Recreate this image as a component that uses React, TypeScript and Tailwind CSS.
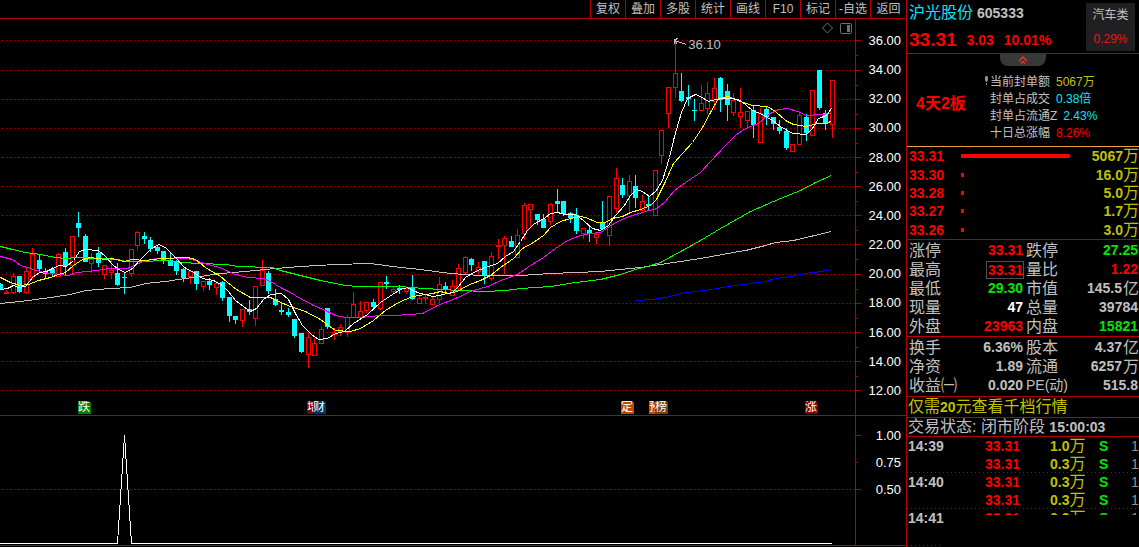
import React, { useState } from 'react';

type Candle = [number, number, number, number, 'u' | 'd'];

// high, body top, body bottom, low, direction
const candles: Candle[] = [
  [283, 284, 288, 289, 'd'], [290, 292, 293, 293, 'u'], [273, 276, 292, 293, 'u'], [276, 276, 291, 292, 'd'],
  [268, 271, 292, 293, 'u'], [248, 254, 276, 278, 'u'], [254, 260, 268, 270, 'd'], [268, 271, 273, 278, 'd'],
  [267, 269, 272, 276, 'd'], [253, 254, 276, 276, 'u'], [248, 252, 265, 275, 'd'], [236, 236, 265, 273, 'u'],
  [212, 223, 227, 236, 'd'], [234, 236, 261, 261, 'd'], [253, 259, 263, 272, 'u'], [247, 253, 262, 266, 'd'],
  [265, 265, 274, 278, 'u'], [257, 270, 272, 278, 'u'], [263, 273, 284, 285, 'd'], [273, 277, 277, 293, 'd'],
  [249, 249, 273, 276, 'u'], [231, 232, 245, 249, 'u'], [232, 236, 238, 243, 'd'], [237, 240, 248, 251, 'd'],
  [246, 247, 250, 253, 'd'], [251, 251, 259, 263, 'd'], [253, 260, 265, 265, 'd'], [260, 261, 270, 274, 'd'],
  [268, 269, 277, 281, 'd'], [271, 271, 276, 283, 'u'], [271, 271, 283, 289, 'd'], [281, 281, 286, 290, 'u'],
  [278, 281, 284, 289, 'd'], [281, 283, 287, 294, 'u'], [281, 282, 297, 300, 'd'], [297, 297, 315, 321, 'd'],
  [316, 316, 319, 323, 'd'], [309, 309, 320, 326, 'u'], [300, 309, 311, 314, 'd'], [286, 286, 318, 325, 'u'],
  [260, 270, 285, 285, 'u'], [271, 273, 290, 293, 'd'], [289, 299, 304, 305, 'd'], [303, 310, 311, 314, 'd'],
  [308, 312, 314, 316, 'd'], [319, 319, 335, 337, 'd'], [333, 333, 351, 352, 'd'], [333, 337, 354, 367, 'u'],
  [338, 343, 355, 355, 'u'], [327, 329, 343, 343, 'u'], [308, 308, 326, 328, 'd'], [328, 332, 334, 339, 'u'],
  [324, 327, 331, 335, 'u'], [315, 317, 332, 336, 'u'], [292, 304, 317, 317, 'u'], [301, 311, 317, 317, 'u'],
  [302, 302, 310, 312, 'u'], [299, 302, 306, 308, 'd'], [282, 282, 308, 309, 'u'], [276, 282, 283, 288, 'd'],
  [287, 289, 291, 293, 'u'], [285, 288, 289, 293, 'd'], [287, 288, 291, 293, 'u'], [275, 288, 298, 299, 'd'],
  [295, 298, 303, 303, 'u'], [295, 297, 298, 303, 'u'], [296, 299, 304, 304, 'u'], [277, 284, 299, 302, 'u'],
  [282, 286, 288, 291, 'd'], [280, 286, 295, 295, 'u'], [264, 268, 288, 289, 'u'], [256, 257, 272, 274, 'u'],
  [258, 259, 264, 270, 'd'], [262, 267, 271, 273, 'u'], [261, 261, 275, 283, 'd'], [252, 256, 278, 280, 'u'],
  [239, 245, 246, 258, 'u'], [236, 238, 245, 273, 'u'], [236, 241, 246, 246, 'd'], [229, 235, 257, 257, 'u'],
  [203, 205, 233, 239, 'u'], [204, 204, 209, 226, 'u'], [214, 214, 219, 224, 'd'], [214, 219, 227, 227, 'd'],
  [203, 204, 221, 224, 'u'], [189, 201, 203, 211, 'd'], [201, 201, 213, 215, 'd'], [212, 213, 217, 222, 'd'],
  [208, 215, 230, 233, 'd'], [228, 228, 233, 238, 'u'], [226, 230, 233, 241, 'd'], [232, 234, 237, 243, 'u'],
  [201, 223, 228, 229, 'd'], [196, 196, 235, 245, 'u'], [168, 178, 208, 212, 'u'], [178, 185, 194, 197, 'd'],
  [175, 181, 195, 211, 'u'], [175, 186, 197, 207, 'd'], [195, 201, 210, 210, 'u'], [195, 204, 205, 210, 'd'],
  [170, 170, 215, 215, 'u'], [130, 130, 155, 163, 'u'], [87, 87, 113, 127, 'u'], [40, 73, 87, 97, 'u'],
  [73, 91, 100, 101, 'd'], [85, 97, 98, 105, 'd'], [99, 110, 110, 120, 'd'], [85, 103, 110, 110, 'u'],
  [82, 93, 108, 113, 'u'], [78, 88, 101, 109, 'u'], [77, 78, 99, 111, 'd'], [84, 91, 104, 120, 'd'],
  [93, 100, 112, 115, 'u'], [88, 112, 116, 127, 'u'], [111, 111, 120, 128, 'u'], [106, 110, 124, 137, 'd'],
  [108, 113, 142, 142, 'u'], [107, 109, 116, 124, 'd'], [117, 117, 123, 129, 'd'], [120, 127, 130, 133, 'd'],
  [128, 131, 147, 149, 'd'], [144, 144, 151, 151, 'u'], [113, 115, 144, 144, 'u'], [114, 117, 132, 140, 'd'],
  [90, 90, 135, 135, 'u'], [70, 70, 107, 109, 'd'], [110, 113, 123, 129, 'd'], [80, 80, 124, 137, 'u'],
];

const averages = [
  {
    color: '#c0c0c0',
    points: '0,303 20,301 50,297 70,294 85,290 110,288 130,287 145,283 165,281 185,278 200,276 220,273 245,271 275,268 300,266 335,264 370,263 385,265 400,267 420,269 450,273 480,275 520,275 550,273 600,271 640,267 660,264 700,258 733,252 745,250 765,245 775,242 793,240 831,231',
  },
  {
    color: '#0000ff',
    points: '635,300 652,299 670,296 680,293 710,289 735,285 765,281 775,278 790,276 805,273 820,271 831,269',
  },
  {
    color: '#00ff00',
    points: '0,246 12,249 25,252 40,254 55,257 66,258 75,257 100,258 118,259 125,261 140,261 165,260 180,262 200,263 225,264 237,266 272,267 280,270 300,275 320,280 345,285 357,286 400,286 423,288 460,290 485,291 505,290 520,288 550,286 575,282 600,279 620,274 635,269 650,265 660,262 682,250 700,240 720,228 750,211 780,198 800,190 815,182 831,175',
  },
  {
    color: '#ff00ff',
    points: '0,256 12,259 20,265 30,268 43,272 58,274 68,275 76,272 97,270 108,268 127,268 140,262 155,258 186,258 195,260 204,263 219,267 235,274 248,277 263,278 270,281 280,287 290,292 300,298 313,305 325,310 335,315 345,317 360,317 380,315 395,315 422,313 437,305 455,298 470,291 487,286 503,279 517,274 530,265 543,257 555,248 567,240 580,235 590,233 600,232 609,226 619,220 629,216 645,211 656,208 664,202 674,190 685,182 700,172 710,161 725,145 735,135 745,128 758,123 768,114 778,109 787,108 797,111 806,115 831,113',
  },
  {
    color: '#ffff00',
    points: '0,277 10,282 20,285 28,284 38,280 50,277 58,274 65,272 73,265 82,259 90,257 105,259 112,258 123,261 132,259 145,260 160,258 187,257 195,259 205,267 213,272 219,275 227,282 236,289 250,297 270,297 278,301 290,306 305,311 320,319 328,325 335,330 350,331 360,328 373,320 385,310 398,302 412,296 432,293 440,291 448,293 457,291 467,285 480,280 490,275 500,267 513,258 522,248 533,242 543,235 550,227 560,221 570,218 580,216 585,217 597,222 605,222 612,218 622,216 630,212 640,209 650,205 656,199 665,181 673,163 682,153 692,142 702,127 710,112 718,98 728,96 740,101 752,105 767,106 775,111 785,120 793,124 805,126 818,123 827,123 831,120',
  },
  {
    color: '#ffffff',
    points: '0,289 7,288 13,285 18,287 25,286 32,277 39,272 46,271 52,268 59,265 66,266 73,260 79,251 85,249 98,250 105,256 112,264 118,269 125,272 132,268 140,259 150,249 158,244 165,247 175,257 184,267 195,273 202,278 213,280 222,285 228,291 235,300 243,306 250,311 256,308 263,299 270,294 281,293 288,299 295,313 302,325 311,334 318,339 327,338 335,333 344,331 353,323 367,314 380,302 392,294 400,289 407,287 412,290 420,293 433,296 452,292 458,286 465,277 475,271 485,267 497,263 505,256 513,251 520,241 527,230 533,224 540,220 545,217 550,213 557,212 565,214 575,214 583,220 592,228 600,230 608,225 615,215 624,205 630,195 636,189 642,191 649,196 656,190 662,180 669,157 674,136 681,112 687,98 695,94 700,96 708,101 715,99 725,98 732,98 740,100 752,110 762,114 772,120 780,126 792,133 806,134 812,128 818,118 826,115 831,108',
  },
];

const gridRows = [40, 70, 99, 128, 157, 186, 215, 244, 274, 303, 332, 361, 390];
const priceLabels = ['36.00', '34.00', '32.00', '30.00', '28.00', '26.00', '24.00', '22.00', '20.00', '18.00', '16.00', '14.00', '12.00'];

const toolbar = ['复权', '叠加', '多股', '统计', '画线', 'F10', '标记', '-自选', '返回'];

const badges = [
  { text: '跌', x: 78, className: 'w-[13px] bg-[#008000]' },
  { text: '增', x: 307, className: 'w-[6px] bg-[#800000]' },
  { text: '财', x: 313, className: 'w-[13px] bg-[#003366]' },
  { text: '定', x: 621, className: 'w-[13px] bg-[#c04808]' },
  { text: '预', x: 649, className: 'w-[6px] bg-[#c04808]' },
  { text: '榜', x: 655, className: 'w-[13px] bg-[#804000]' },
  { text: '涨', x: 805, className: 'w-[13px] bg-[#800000]' },
];

const sealInfo = [
  { label: '当前封单额', value: '5067万', color: 'text-[#c0c000]' },
  { label: '封单占成交', value: '0.38倍', color: 'text-[#00e5ff]' },
  { label: '封单占流通Z', value: '2.43%', color: 'text-[#00e5ff]' },
  { label: '十日总涨幅', value: '8.26%', color: 'text-[#ff0000]' },
];

const book = [
  { price: '33.31', amount: '5067', bar: 109 },
  { price: '33.30', amount: '16.0', bar: 3 },
  { price: '33.28', amount: '5.0', bar: 3 },
  { price: '33.27', amount: '1.7', bar: 3 },
  { price: '33.26', amount: '3.0', bar: 3 },
];

interface Quote {
  label: string;
  value: string;
  unit?: string;
  color: string;
  boxed?: boolean;
}

const quotes: Quote[] = [
  { label: '涨停', value: '33.31', color: 'text-[#ff0000]' },
  { label: '跌停', value: '27.25', color: 'text-[#00e600]' },
  { label: '最高', value: '33.31', color: 'text-[#ff0000]', boxed: true },
  { label: '量比', value: '1.22', color: 'text-[#ff0000]' },
  { label: '最低', value: '29.30', color: 'text-[#00e600]' },
  { label: '市值', value: '145.5', unit: '亿', color: 'text-[#c0c0c0]' },
  { label: '现量', value: '47', color: 'text-white' },
  { label: '总量', value: '39784', color: 'text-[#c0c0c0]' },
  { label: '外盘', value: '23963', color: 'text-[#ff0000]' },
  { label: '内盘', value: '15821', color: 'text-[#00e600]' },
];

const fundamentals: Quote[] = [
  { label: '换手', value: '6.36%', color: 'text-[#c0c0c0]' },
  { label: '股本', value: '4.37', unit: '亿', color: 'text-[#c0c0c0]' },
  { label: '净资', value: '1.89', color: 'text-[#c0c0c0]' },
  { label: '流通', value: '6257', unit: '万', color: 'text-[#c0c0c0]' },
  { label: '收益㈠', value: '0.020', color: 'text-[#c0c0c0]' },
  { label: 'PE(动)', value: '515.8', color: 'text-[#c0c0c0]' },
];

const trades = [
  { time: '14:39', volume: '1.0' },
  { time: '', volume: '0.3' },
  { time: '14:40', volume: '0.3' },
  { time: '', volume: '0.3' },
];

function CandleChart() {
  return (
    <div className="relative h-[396px] min-w-0 flex-1">
      <svg
        className="block h-full w-full"
        viewBox="0 19 855 396"
        preserveAspectRatio="none"
        shapeRendering="crispEdges"
        role="img"
        aria-label="K线图"
      >
        {gridRows.map((y) => (
          <line key={y} x1="2" x2="855" y1={y + 0.5} y2={y + 0.5} stroke="#b40000" strokeDasharray="1 3" />
        ))}
        {candles.map(([high, top, bottom, low, dir], i) => {
          const x = Math.floor(i * 6.5535);
          const color = dir === 'u' ? '#ff0000' : '#00ffff';
          return (
            <g key={i}>
              <rect x={x} y={high} width="1" height={low - high + 1} fill={color} />
              {dir === 'u' ? (
                <rect x={x - 1.5} y={top + 0.5} width="4" height={bottom - top} fill="#000" stroke={color} />
              ) : (
                <rect x={x - 2} y={top} width="5" height={bottom - top + 1} fill={color} />
              )}
            </g>
          );
        })}
        <g transform="translate(0.5 0.5)" fill="none">
          {averages.map((line) => (
            <polyline key={line.color} points={line.points} stroke={line.color} />
          ))}
          <path d="M674 40 L686 44 M674 43 V39 L678 38 M675 41 L677 44" stroke="#c0c0c0" />
        </g>
      </svg>
      <span className="absolute top-[18px] left-[80.5%] text-[13px] leading-4 text-[#c0c0c0]">36.10</span>
      <svg className="absolute top-[3px] right-[2px] h-3 w-8" viewBox="0 0 32 12" fill="none" stroke="#707070">
        <path d="M6.5 1 L11.5 6 L6.5 11 L1.5 6 Z" />
        <rect x="19.5" y="1.5" width="11" height="10" rx="1" />
        <rect x="26" y="3" width="3" height="7" fill="#707070" stroke="none" />
      </svg>
      {badges.map((b) => (
        <span
          key={b.text}
          style={{ left: `${(b.x / 855) * 100}%` }}
          className={`absolute top-[382px] h-[13px] overflow-hidden rounded-tr-[3px] text-[12px] leading-[13px] whitespace-nowrap text-white ${b.className}`}
        >
          {b.text}
        </span>
      ))}
    </div>
  );
}

function PriceAxis() {
  return (
    <div className="flex w-[51px] shrink-0 border-l border-[#b40000]">
      <svg className="h-[396px] w-[5px] shrink-0" viewBox="0 19 5 396" shapeRendering="crispEdges" fill="#b40000">
        {gridRows.map((y) => (
          <g key={y}>
            <rect x="0" y={y} width="5" height="1" />
            {y < 390 && <rect x="0" y={y + 15} width="2" height="1" />}
          </g>
        ))}
      </svg>
      <div className="mt-[14px] flex h-[366px] flex-1 flex-col justify-between pr-[5px] text-right text-[13px] leading-4 text-white">
        {priceLabels.map((p) => (
          <span key={p}>{p}</span>
        ))}
      </div>
    </div>
  );
}

function Indicator() {
  return (
    <div className="flex h-[130px] border-b border-[#b40000]">
      <svg
        className="block h-full min-w-0 flex-1"
        viewBox="0 416 855 129"
        preserveAspectRatio="none"
        shapeRendering="crispEdges"
        fill="none"
      >
        <line x1="2" x2="855" y1="489.5" y2="489.5" stroke="#b40000" strokeDasharray="1 3" />
        <path d="M0 543.5 H117.5 L124.5 435.5 L131.5 543.5 H832" stroke="#fff" />
      </svg>
      <div className="flex w-[51px] shrink-0 border-l border-[#b40000]">
        <svg className="h-[129px] w-[5px] shrink-0" viewBox="0 416 5 129" shapeRendering="crispEdges" fill="#b40000">
          <rect x="0" y="435" width="5" height="1" />
          <rect x="0" y="462" width="2" height="1" />
          <rect x="0" y="489" width="5" height="1" />
        </svg>
        <div className="mt-3 flex h-[70px] flex-1 flex-col justify-between pr-[5px] text-right text-[13px] leading-4 text-white">
          <span>1.00</span>
          <span>0.75</span>
          <span>0.50</span>
        </div>
      </div>
    </div>
  );
}

function QuoteGrid({ items }: { items: Quote[] }) {
  return (
    <dl className="grid grid-cols-[116px_1fr] pt-px pl-[2px]">
      {items.map((q) => (
        <div key={q.label} className="flex h-[19px] items-center justify-between odd:pr-px even:pl-px">
          <dt className={q.label.startsWith('PE') ? 'text-[14px] whitespace-nowrap' : 'text-[16px] whitespace-nowrap'}>{q.label}</dt>
          <dd className={`flex items-center text-[14px] font-bold ${q.color}`}>
            <span className={q.boxed ? 'border border-[#505050] pl-px leading-4' : 'pr-px'}>{q.value}</span>
            {q.unit && <span className="text-[16px] font-normal">{q.unit}</span>}
          </dd>
        </div>
      ))}
    </dl>
  );
}

function Sidebar() {
  const [open, setOpen] = useState<boolean>(true);

  return (
    <aside className="w-[233px] shrink-0 border-l border-[#b40000] text-[#c0c0c0]">
      <header className="flex h-[54px] justify-between border-b border-[#b40000] pt-[3px] pr-1 pl-[2px]">
        <div>
          <div className="flex h-5 items-center gap-1">
            <h1 className="text-[16px] text-[#00e5ff]">沪光股份</h1>
            <span className="text-[14px] font-bold">605333</span>
          </div>
          <div className="flex h-[34px] items-center gap-[10px] text-[14px] font-bold text-[#ff0000]">
            <span className="text-[19px]">33.31</span>
            <span>3.03</span>
            <span>10.01%</span>
          </div>
        </div>
        <a href="#sector" className="flex h-12 w-[49px] flex-col items-center bg-[#202022] text-[12px] leading-6">
          <span>汽车类</span>
          <span className="text-[#e81818]">0.29%</span>
        </a>
      </header>

      <section className="h-[93px] border-b border-[#e8a040]">
        <button
          type="button"
          aria-label="收起"
          onClick={() => setOpen(!open)}
          className="mx-auto flex h-3 w-[46px] items-center justify-center rounded-b-lg bg-[#383838]"
        >
          <svg className="h-2 w-[10px]" viewBox="0 0 10 8" fill="none" stroke="#ff3030" strokeWidth="1.3">
            <path d="M1 5 L5 1 L9 5 M3 7.5 L5 5.5 L7 7.5" />
          </svg>
        </button>
        {open && (
          <div className="flex pt-2 pl-[9px]">
            <strong className="w-[68px] pt-[18px] text-[16px] leading-6 text-[#ff0000]">4天2板</strong>
            <svg className="mt-[2px] h-[9px] w-[6px]" viewBox="0 0 6 9" fill="#909090">
              <path d="M1 1 L2 0 H3 L4 1 V4 L3 6 H2 L1 4 Z M2 7 H3 V9 H2 Z" />
            </svg>
            <dl className="text-[12px] leading-[17px]">
              {sealInfo.map((s) => (
                <div key={s.label} className="flex gap-[6px]">
                  <dt>{s.label}</dt>
                  <dd className={s.color}>{s.value}</dd>
                </div>
              ))}
            </dl>
          </div>
        )}
      </section>

      <table className="h-[93px] w-full border-b border-[#b40000] text-[14px] font-bold">
        <tbody>
          {book.map((row) => (
            <tr key={row.price} className="h-[18px] leading-[18px]">
              <td className="w-[54px] p-0 pl-[2px] text-[#ff0000]">{row.price}</td>
              <td className="p-0">
                <div style={{ width: row.bar }} className="h-1 bg-[#ff0000]" />
              </td>
              <td className="w-[60px] p-0 text-[#c0c000]">
                <div className="flex h-[18px] items-center justify-end">
                  {row.amount}
                  <span className="text-[16px] font-normal">万</span>
                </div>
              </td>
            </tr>
          ))}
        </tbody>
      </table>

      <div className="border-b border-[#b40000]">
        <QuoteGrid items={quotes} />
      </div>
      <div className="border-b border-[#b40000] pb-px">
        <QuoteGrid items={fundamentals} />
      </div>

      <a href="#level2" className="flex h-[21px] items-center border-b border-[#b40000] pl-px text-[16px] text-[#c0c000]">
        仅需<b className="text-[14px]">20</b>元查看千档行情
      </a>
      <p className="flex h-[19px] items-center border-b border-[#b40000] pl-px text-[16px]">
        交易状态:&nbsp;闭市阶段&nbsp;<b className="text-[14px]">15:00:03</b>
      </p>

      <table className="w-full table-fixed text-[14px] font-bold">
        <tbody>
          {trades.map((t, i) => (
            <tr
              key={i}
              className={
                i % 2 === 1
                  ? 'h-[18px] bg-[repeating-linear-gradient(90deg,#b40000_0_1px,transparent_1px_4px)] bg-[length:100%_1px] bg-bottom bg-no-repeat'
                  : 'h-[18px]'
              }
            >
              <td className="w-[78px] p-0 pl-px leading-[18px]">{t.time}</td>
              <td className="w-[65px] p-0 leading-[18px] text-[#ff0000]">33.31</td>
              <td className="w-[49px] p-0 text-[#c0c000]">
                <div className="flex h-[18px] items-center">
                  {t.volume}
                  <span className="text-[16px] font-normal">万</span>
                </div>
              </td>
              <td className="p-0 leading-[18px] text-[#00e600]">S</td>
              <td className="w-[8px] p-0 leading-[18px] font-normal text-[#909090]">1</td>
            </tr>
          ))}
          <tr className="h-[37px] bg-[repeating-linear-gradient(90deg,#b40000_0_1px,transparent_1px_4px)] bg-[length:36px_1px] bg-left-bottom bg-no-repeat align-top">
            <td className="p-0 pl-px leading-[18px]">14:41</td>
            <td className="p-0 text-[#ff0000]">
              <div className="h-[6px] overflow-hidden leading-[18px]">33.31</div>
            </td>
            <td className="p-0 text-[#c0c000]">
              <div className="h-[6px] overflow-hidden">
                <div className="flex h-[18px] items-center">
                  0.3<span className="text-[16px] font-normal">万</span>
                </div>
              </div>
            </td>
            <td className="p-0 text-[#00e600]">
              <div className="h-[6px] overflow-hidden leading-[18px]">S</div>
            </td>
            <td className="p-0 font-normal text-[#909090]">
              <div className="h-[6px] overflow-hidden leading-[18px]">1</div>
            </td>
          </tr>
        </tbody>
      </table>
    </aside>
  );
}

export default function App() {
  return (
    <div className="flex min-h-screen w-full bg-black font-['Liberation_Sans','Noto_Sans_CJK_SC',sans-serif]">
      <main className="min-w-0 flex-1">
        <nav className="flex h-[19px] justify-end border-b border-[#b40000]">
          {toolbar.map((item) => (
            <button
              key={item}
              type="button"
              className="w-[35px] border-l border-[#b40000] text-center text-[12px] leading-4 whitespace-nowrap text-[#c0c0c0] last:w-9"
            >
              {item}
            </button>
          ))}
        </nav>
        <div className="flex border-b border-[#b40000]">
          <CandleChart />
          <PriceAxis />
        </div>
        <Indicator />
      </main>
      <Sidebar />
    </div>
  );
}
